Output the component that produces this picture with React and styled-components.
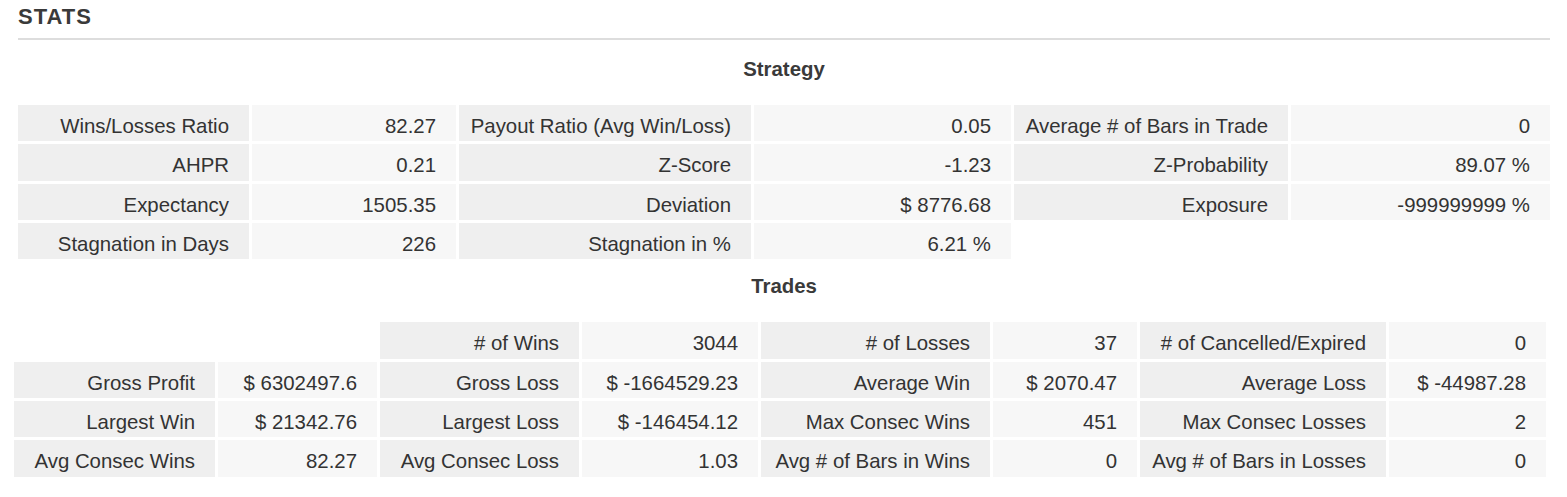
import styled, { createGlobalStyle } from "styled-components";

const GlobalStyle = createGlobalStyle`
  body {
    margin: 0;
    background: #fff;
    font-family: "Liberation Sans", Arial, sans-serif;
    color: #333;
  }
`;

const PAGE = styled.div`
  padding: 4px 17px 0 18px;
`;

const TITLE = styled.h2`
  margin: 0;
  padding-bottom: 8px;
  border-bottom: 2px solid #ddd;
  font-size: 22px;
  line-height: 26px;
  letter-spacing: 1px;
  font-weight: bold;
  color: #3a3a3a;
`;

const SECTION_TITLE = styled.h3`
  margin: ${(props) => props.$top} 0 24px;
  text-align: center;
  font-size: 20.4px;
  line-height: 24px;
  font-weight: bold;
  color: #3a3a3a;
`;

const GRID = styled.div`
  display: grid;
  grid-template-columns: ${(props) => props.$cols};
  grid-auto-rows: 36.33px;
  gap: 3px;
  width: 1532px;
  margin-left: ${(props) => props.$shift || "0px"};
`;

const CELL = styled.div`
  box-sizing: border-box;
  padding: 10px 20px 0 6px;
  font-size: 20.4px;
  line-height: 22px;
  text-align: right;
  white-space: nowrap;
  color: #333;
  background-color: ${(props) => (props.$label ? "#efefef" : "#f7f7f7")};
`;

const BLANK = styled.div``;

const strategy = [
  ["Wins/Losses Ratio", "82.27", "Payout Ratio (Avg Win/Loss)", "0.05", "Average # of Bars in Trade", "0"],
  ["AHPR", "0.21", "Z-Score", "-1.23", "Z-Probability", "89.07 %"],
  ["Expectancy", "1505.35", "Deviation", "$ 8776.68", "Exposure", "-999999999 %"],
  ["Stagnation in Days", "226", "Stagnation in %", "6.21 %"],
];

const trades = [
  [null, null, "# of Wins", "3044", "# of Losses", "37", "# of Cancelled/Expired", "0"],
  ["Gross Profit", "$ 6302497.6", "Gross Loss", "$ -1664529.23", "Average Win", "$ 2070.47", "Average Loss", "$ -44987.28"],
  ["Largest Win", "$ 21342.76", "Largest Loss", "$ -146454.12", "Max Consec Wins", "451", "Max Consec Losses", "2"],
  ["Avg Consec Wins", "82.27", "Avg Consec Loss", "1.03", "Avg # of Bars in Wins", "0", "Avg # of Bars in Losses", "0"],
];

const StatGrid = ({ rows, cols, shift }) => (
  <GRID $cols={cols} $shift={shift}>
    {rows.map((row, r) => {
      const cells = row.map((text, i) =>
        text === null ? (
          <BLANK key={`${r}-${i}`} />
        ) : (
          <CELL key={`${r}-${i}`} $label={i % 2 === 0}>
            {text}
          </CELL>
        )
      );
      // pad short rows so the next one starts on a fresh line
      const total = cols.split(" ").length;
      for (let i = row.length; i < total; i++) cells.push(<BLANK key={`${r}-pad-${i}`} />);
      return cells;
    })}
  </GRID>
);

export default function App() {
  return (
    <PAGE>
      <GlobalStyle />
      <TITLE>STATS</TITLE>
      <SECTION_TITLE $top="17px">Strategy</SECTION_TITLE>
      <StatGrid rows={strategy} cols="231px 204px 292px 257px 274px 259px" />
      <SECTION_TITLE $top="15px">Trades</SECTION_TITLE>
      <StatGrid
        rows={trades}
        cols="201px 159px 199px 176px 229px 144px 246px 157px"
        shift="-4px"
      />
    </PAGE>
  );
}
